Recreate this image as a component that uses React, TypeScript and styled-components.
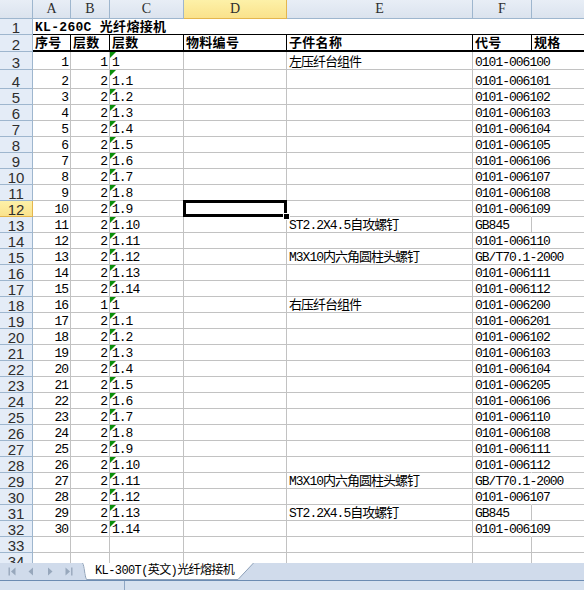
import React from "react";
import styled, { createGlobalStyle, css } from "styled-components";

const GlobalStyle = createGlobalStyle`
  *, *::before, *::after { box-sizing: border-box; }
  html, body { margin: 0; padding: 0; background: #fff; }
`;

const GRID = "#c2c2c2";
const HEAD_LINE = "#9eb6ce";
const cellFont = `"Liberation Mono", "Noto Sans CJK SC", monospace`;

type Item = { no: number; level: number; code: string; name?: string; ref?: string };

const items: Item[] = [
    { no: 1, level: 1, code: "1", name: "左压纤台组件", ref: "0101-006100" },
    { no: 2, level: 2, code: "1.1", ref: "0101-006101" },
    { no: 3, level: 2, code: "1.2", ref: "0101-006102" },
    { no: 4, level: 2, code: "1.3", ref: "0101-006103" },
    { no: 5, level: 2, code: "1.4", ref: "0101-006104" },
    { no: 6, level: 2, code: "1.5", ref: "0101-006105" },
    { no: 7, level: 2, code: "1.6", ref: "0101-006106" },
    { no: 8, level: 2, code: "1.7", ref: "0101-006107" },
    { no: 9, level: 2, code: "1.8", ref: "0101-006108" },
    { no: 10, level: 2, code: "1.9", ref: "0101-006109" },
    { no: 11, level: 2, code: "1.10", name: "ST2.2X4.5自攻螺钉", ref: "GB845" },
    { no: 12, level: 2, code: "1.11", ref: "0101-006110" },
    { no: 13, level: 2, code: "1.12", name: "M3X10内六角圆柱头螺钉", ref: "GB/T70.1-2000" },
    { no: 14, level: 2, code: "1.13", ref: "0101-006111" },
    { no: 15, level: 2, code: "1.14", ref: "0101-006112" },
    { no: 16, level: 1, code: "1", name: "右压纤台组件", ref: "0101-006200" },
    { no: 17, level: 2, code: "1.1", ref: "0101-006201" },
    { no: 18, level: 2, code: "1.2", ref: "0101-006102" },
    { no: 19, level: 2, code: "1.3", ref: "0101-006103" },
    { no: 20, level: 2, code: "1.4", ref: "0101-006104" },
    { no: 21, level: 2, code: "1.5", ref: "0101-006205" },
    { no: 22, level: 2, code: "1.6", ref: "0101-006106" },
    { no: 23, level: 2, code: "1.7", ref: "0101-006110" },
    { no: 24, level: 2, code: "1.8", ref: "0101-006108" },
    { no: 25, level: 2, code: "1.9", ref: "0101-006111" },
    { no: 26, level: 2, code: "1.10", ref: "0101-006112" },
    { no: 27, level: 2, code: "1.11", name: "M3X10内六角圆柱头螺钉", ref: "GB/T70.1-2000" },
    { no: 28, level: 2, code: "1.12", ref: "0101-006107" },
    { no: 29, level: 2, code: "1.13", name: "ST2.2X4.5自攻螺钉", ref: "GB845" },
    { no: 30, level: 2, code: "1.14", ref: "0101-006109" },
];

const columns = ["A", "B", "C", "D", "E", "F", ""];
const headers = ["序号", "层数", "层数", "物料编号", "子件名称", "代号", "规格"];
const ACTIVE_COL = "D";
const ACTIVE_ROW = 12;

export default function App() {
    return (
        <Window>
            <GlobalStyle />
            <Sheet>
                <Corner />
                {columns.map((c, i) => (
                    <ColHead key={i} $active={c === ACTIVE_COL}>
                        {c}
                    </ColHead>
                ))}

                <RowHead>1</RowHead>
                <TitleCell>KL-260C 光纤熔接机</TitleCell>

                <RowHead>2</RowHead>
                {headers.map((h, i) => (
                    <HeadCell key={i}>{h}</HeadCell>
                ))}

                {items.map((it, i) => {
                    const row = i + 3;
                    // long codes run on into the next column, hiding the gridline
                    const spill = (it.ref ?? "").length > 8;
                    return (
                        <React.Fragment key={row}>
                            <RowHead $active={row === ACTIVE_ROW}>{row}</RowHead>
                            <Cell $align="right">{it.no}</Cell>
                            <Cell $align="right">{it.level}</Cell>
                            <Cell $mark>{it.code}</Cell>
                            <Cell $selected={row === ACTIVE_ROW} />
                            <Cell>{it.name}</Cell>
                            <Cell $spill={spill}>{it.ref}</Cell>
                            <Cell />
                        </React.Fragment>
                    );
                })}

                {[33, 34].map((row) => (
                    <React.Fragment key={row}>
                        <RowHead>{row}</RowHead>
                        {columns.map((_, i) => (
                            <Cell key={i} />
                        ))}
                    </React.Fragment>
                ))}
            </Sheet>

            <TabBar>
                <NavGroup>
                    <NavButton>
                        <svg width="8" height="9" viewBox="0 0 8 9">
                            <rect x="0.5" y="0.5" width="1.4" height="8" fill="currentColor" />
                            <path d="M7.5 0.5 L3 4.5 L7.5 8.5 Z" fill="currentColor" />
                        </svg>
                    </NavButton>
                    <NavButton>
                        <svg width="6" height="9" viewBox="0 0 6 9">
                            <path d="M5 0.5 L0.5 4.5 L5 8.5 Z" fill="currentColor" />
                        </svg>
                    </NavButton>
                    <NavButton>
                        <svg width="6" height="9" viewBox="0 0 6 9">
                            <path d="M1 0.5 L5.5 4.5 L1 8.5 Z" fill="currentColor" />
                        </svg>
                    </NavButton>
                    <NavButton>
                        <svg width="8" height="9" viewBox="0 0 8 9">
                            <path d="M0.5 0.5 L5 4.5 L0.5 8.5 Z" fill="currentColor" />
                            <rect x="6.1" y="0.5" width="1.4" height="8" fill="currentColor" />
                        </svg>
                    </NavButton>
                </NavGroup>
                <SheetTab>
                    <TabShape width="172" height="17" viewBox="0 0 172 17">
                        <path d="M0 0 C2 3 2 13 4 16.5 L156 16.5 L171.5 0 Z" fill="#fff" />
                        <path d="M0.5 0 C2.5 3 2.5 13 4.5 16.5 L156 16.5 L171.5 0" fill="none" stroke="#8da0b8" />
                    </TabShape>
                    <TabLabel>KL-300T(英文)光纤熔接机</TabLabel>
                </SheetTab>
            </TabBar>
            <StatusBar>
                <StatusPane />
            </StatusBar>
        </Window>
    );
}

const Window = styled.div`
    width: 584px;
    height: 590px;
    overflow: hidden;
    display: flex;
    flex-direction: column;
    background: #fff;
`;

const Sheet = styled.div`
    flex: 0 0 563px;
    overflow: hidden;
    display: grid;
    grid-template-columns: 33px 38px 39px 74px 103px 186px 59px 120px;
    grid-template-rows: 19px 16px 17px 18px 19px repeat(30, 16px);
    font-family: ${cellFont};
    font-size: 13px;
    color: #000;
`;

const headBase = css`
    display: flex;
    justify-content: center;
    border-right: 1px solid ${HEAD_LINE};
    border-bottom: 1px solid ${HEAD_LINE};
    color: #2e2e2e;
`;

const activeHead = css`
    background: linear-gradient(#fdf1a8, #fae28c);
    border-color: #e4b64e;
`;

const Corner = styled.div`
    ${headBase};
    background: linear-gradient(#e8eef6, #dbe3ee);
`;

const ColHead = styled.div<{ $active?: boolean }>`
    ${headBase};
    align-items: center;
    font-family: "Liberation Serif", serif;
    font-size: 14px;
    background: linear-gradient(#e8eef6, #dbe3ee);
    ${(p) => p.$active && activeHead};
`;

const RowHead = styled.div<{ $active?: boolean }>`
    ${headBase};
    align-items: flex-end;
    font-family: "Liberation Sans", Arial, sans-serif;
    font-size: 15px;
    line-height: 13px;
    background: #e4ecf7;
    ${(p) => p.$active && activeHead};
`;

const TitleCell = styled.div`
    grid-column: 2 / -1;
    display: flex;
    align-items: flex-end;
    padding: 0 2px;
    line-height: 13px;
    font-weight: bold;
    letter-spacing: 0.3px;
    white-space: nowrap;
    border-bottom: 1px solid #000;
`;

const HeadCell = styled.div`
    display: flex;
    align-items: flex-end;
    padding: 0 2px;
    line-height: 13px;
    font-weight: bold;
    letter-spacing: 0.3px;
    white-space: nowrap;
    border-right: 1px solid #000;
    border-bottom: 2px solid #000;
`;

const Cell = styled.div<{ $align?: "left" | "right"; $spill?: boolean; $mark?: boolean; $selected?: boolean }>`
    position: relative;
    min-width: 0;
    display: flex;
    align-items: flex-end;
    justify-content: ${(p) => (p.$align === "right" ? "flex-end" : "flex-start")};
    padding: 0 2px;
    line-height: 13px;
    letter-spacing: -1px;
    white-space: nowrap;
    border-right: 1px solid ${(p) => (p.$spill ? "transparent" : GRID)};
    border-bottom: 1px solid ${GRID};

    ${(p) =>
        p.$mark &&
        css`
            &::before {
                content: "";
                position: absolute;
                top: 0;
                left: 0;
                border-top: 6px solid #0a8f0a;
                border-right: 6px solid transparent;
            }
        `}

    ${(p) =>
        p.$selected &&
        css`
            z-index: 1;
            &::after {
                content: "";
                position: absolute;
                left: -1px;
                top: -1px;
                right: -1px;
                bottom: -1px;
                border: 3px solid #000;
            }
            &::before {
                content: "";
                position: absolute;
                right: -4px;
                bottom: -4px;
                width: 7px;
                height: 7px;
                background: #000;
                border: 1px solid #fff;
                z-index: 2;
            }
        `}
`;

const TabBar = styled.div`
    flex: 0 0 17px;
    display: flex;
    background: #d0dbeb;
`;

const NavGroup = styled.div`
    width: 82px;
    display: flex;
    align-items: center;
    padding-left: 2px;
`;

const NavButton = styled.div`
    width: 19px;
    display: flex;
    align-items: center;
    justify-content: center;
    color: #97a7bc;
`;

const SheetTab = styled.div`
    position: relative;
    width: 172px;
    display: flex;
    align-items: center;
    padding-left: 13px;
`;

const TabShape = styled.svg`
    position: absolute;
    left: 0;
    top: 0;
`;

const TabLabel = styled.span`
    position: relative;
    font-family: ${cellFont};
    font-size: 12px;
    letter-spacing: -0.6px;
    line-height: 13px;
    color: #000;
    white-space: nowrap;
`;

const StatusBar = styled.div`
    flex: 0 0 10px;
    display: flex;
    background: #d6e1ef;
    border-top: 1px solid #6c8cb2;
`;

const StatusPane = styled.div`
    width: 125px;
    border-right: 1px solid #8ea6c4;
`;
